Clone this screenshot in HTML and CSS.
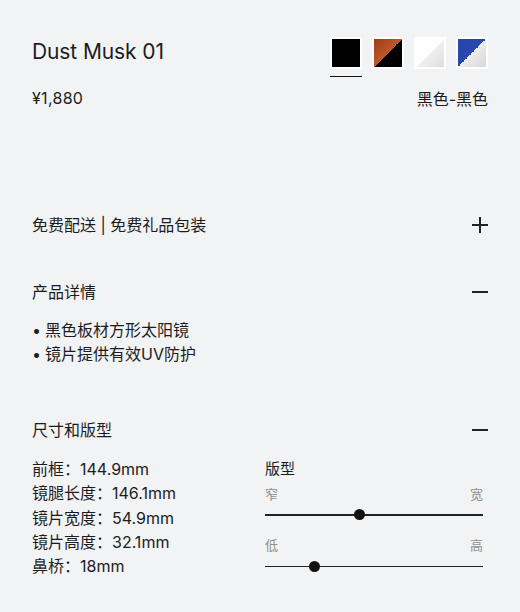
FILE: index.html
```html
<!DOCTYPE html>
<html lang="zh-CN">
<head>
    <meta charset="UTF-8">
    <meta name="viewport" content="width=device-width, initial-scale=1.0">
    <title>Dust Musk 01</title>
    <link rel="stylesheet" href="styles.css">
</head>
<body>
    <div class="page">
        <div class="product-head">
            <div class="product-info">
                <h1 class="product-name">Dust Musk 01</h1>
                <p class="product-price">¥1,880</p>
            </div>
            <div class="product-colors">
                <div class="swatches">
                    <span class="swatch active"><span class="swatch-fill black"></span></span>
                    <span class="swatch"><span class="swatch-fill tortoise"></span></span>
                    <span class="swatch"><span class="swatch-fill white"></span></span>
                    <span class="swatch"><span class="swatch-fill blue"></span></span>
                </div>
                <p class="color-name">黑色-黑色</p>
            </div>
        </div>

        <div class="section section-shipping">
            <div class="section-title">
                <span>免费配送 | 免费礼品包装</span>
                <span class="toggle plus"></span>
            </div>
        </div>

        <div class="section section-details">
            <div class="section-title">
                <span>产品详情</span>
                <span class="toggle minus"></span>
            </div>
            <ul class="detail-list">
                <li>黑色板材方形太阳镜</li>
                <li>镜片提供有效UV防护</li>
            </ul>
        </div>

        <div class="section section-size">
            <div class="section-title">
                <span>尺寸和版型</span>
                <span class="toggle minus"></span>
            </div>
            <div class="size-body">
                <ul class="size-list">
                    <li>前框：144.9mm</li>
                    <li>镜腿长度：146.1mm</li>
                    <li>镜片宽度：54.9mm</li>
                    <li>镜片高度：32.1mm</li>
                    <li>鼻桥：18mm</li>
                </ul>
                <div class="fit">
                    <div class="fit-title">版型</div>
                    <div class="fit-scale">
                        <div class="fit-labels"><span>窄</span><span>宽</span></div>
                        <div class="fit-track"><span class="fit-knob" style="left: 43.5%"></span></div>
                    </div>
                    <div class="fit-scale">
                        <div class="fit-labels"><span>低</span><span>高</span></div>
                        <div class="fit-track"><span class="fit-knob" style="left: 22.5%"></span></div>
                    </div>
                </div>
            </div>
        </div>
    </div>
</body>
</html>
```

FILE: styles.css
```css
body {
    margin: 0;
    background-color: #f2f3f5;
    color: #1c1c1c;
    font-family: Inter, "Noto Sans CJK SC", sans-serif;
}
.page {
    padding: 37px 32px 0 32px;
}
p, h1, ul {
    margin: 0;
    padding: 0;
}
ul {
    list-style: none;
}

/* head */
.product-head {
    display: flex;
    justify-content: space-between;
    align-items: flex-start;
}
.product-name {
    font-size: 21px;
    font-weight: 400;
    line-height: 30px;
    letter-spacing: -0.1px;
}
.product-price {
    margin-top: 21px;
    font-size: 16px;
    line-height: 20px;
    letter-spacing: 0.3px;
}
.product-colors {
    display: flex;
    flex-direction: column;
    align-items: flex-end;
}
.swatches {
    display: flex;
    gap: 10px;
}
.swatch {
    position: relative;
    display: block;
    width: 28px;
    height: 28px;
    padding: 2px;
    background-color: #fff;
}
.swatch.active::after {
    content: "";
    position: absolute;
    left: 0;
    right: 0;
    bottom: -8px;
    height: 1.5px;
    background-color: #111;
}
.swatch-fill {
    display: block;
    width: 100%;
    height: 100%;
}
.swatch-fill.black {
    background-color: #000;
}
.swatch-fill.tortoise {
    background: linear-gradient(to bottom right, #9a3a16 0%, #c0582a 50%, #000 50%, #000 100%);
}
.swatch-fill.white {
    background: linear-gradient(to bottom right, #ffffff 50%, #f0f0f0 50%, #dedede 100%);
}
.swatch-fill.blue {
    background: linear-gradient(to bottom right, #2746ae 50%, #ececec 50%, #d8d8d8 100%);
}
.color-name {
    margin-top: 20px;
    font-size: 16px;
    line-height: 20px;
}

/* accordion sections */
.section-title {
    display: flex;
    justify-content: space-between;
    align-items: center;
    font-size: 16px;
    line-height: 22px;
}
.section-shipping {
    margin-top: 105px;
}
.section-details {
    margin-top: 45px;
}
.section-size {
    margin-top: 53px;
}
.toggle {
    position: relative;
    width: 16px;
    height: 16px;
}
.toggle::before,
.toggle::after {
    content: "";
    position: absolute;
    background-color: #222;
}
.toggle::before {
    left: 0;
    right: 0;
    top: 7px;
    height: 1.6px;
}
.plus::after {
    top: 0;
    bottom: 0;
    left: 7px;
    width: 1.6px;
}
.minus::before {
    height: 2px;
}

.detail-list {
    margin-top: 15px;
    font-size: 16px;
    line-height: 24px;
}
.detail-list li::before {
    content: "•";
    margin-right: 4px;
}

/* size and fit */
.size-body {
    display: grid;
    grid-template-columns: 233px 1fr;
    margin-top: 16px;
}
.size-list {
    font-size: 16px;
    line-height: 24.3px;
}
.fit {
    padding-right: 5px;
}
.fit-title {
    font-size: 15px;
    line-height: 24px;
}
.fit-labels {
    display: flex;
    justify-content: space-between;
    margin-top: 4px;
    font-size: 13px;
    line-height: 18px;
    color: #8e8e8e;
}
.fit-scale + .fit-scale .fit-labels {
    margin-top: 20px;
}
.fit-track {
    position: relative;
    margin-top: 11px;
    height: 1.5px;
    background-color: #222;
}
.fit-scale + .fit-scale .fit-track {
    margin-top: 12px;
}
.fit-knob {
    position: absolute;
    top: -5px;
    width: 11px;
    height: 11px;
    margin-left: -5.5px;
    border-radius: 50%;
    background-color: #111;
}
```
